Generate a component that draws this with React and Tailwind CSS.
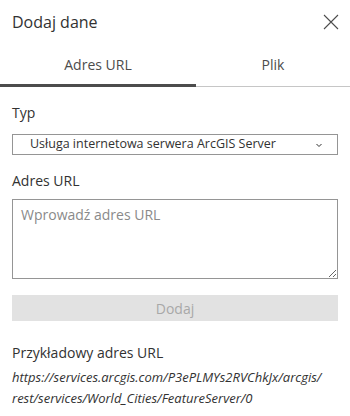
import React, { useState } from "react";

export default function App() {
  const [tab, setTab] = useState(0);
  const [url, setUrl] = useState("");

  return (
    <div
      className="w-[350px] h-[416px] bg-white text-[#323232] overflow-hidden"
      style={{ fontFamily: "'Open Sans', Lato, sans-serif" }}
    >
      {/* Header */}
      <div className="flex items-center justify-between h-[44px] pl-[12px] pr-[8px]">
        <h2 className="text-[16px] font-normal">Dodaj dane</h2>
        <button className="w-[22px] h-[22px] flex items-center justify-center text-[#4c4c4c]">
          <svg width="16" height="16" viewBox="0 0 16 16" fill="none" stroke="currentColor" strokeWidth="1.1">
            <path d="M1 1 L15 15 M15 1 L1 15" />
          </svg>
        </button>
      </div>

      {/* Tabs */}
      <div className="flex h-[43px] border-b border-[#c6c6c6]">
        <button
          onClick={() => setTab(0)}
          className={`w-[196px] text-[14px] text-[#4c4c4c] border-b-[3px] -mb-px ${tab === 0 ? "border-[#4c4c4c]" : "border-transparent"}`}
        >
          Adres URL
        </button>
        <button
          onClick={() => setTab(1)}
          className={`flex-1 text-[14px] text-[#4c4c4c] border-b-[3px] -mb-px ${tab === 1 ? "border-[#4c4c4c]" : "border-transparent"}`}
        >
          Plik
        </button>
      </div>

      {/* Form */}
      <div className="px-[12px] pt-[16px]">
        <label className="block text-[14px] leading-[20px]">Typ</label>
        <div className="mt-[11px] h-[21px] border border-[#959595] flex items-center justify-between pl-[17px] pr-[14px] text-[12.5px]">
          <span>Usługa internetowa serwera ArcGIS Server</span>
          <svg width="8" height="8" viewBox="0 0 8 8" fill="none" stroke="currentColor" strokeWidth="1">
            <path d="M1.5 3 L4 5.5 L6.5 3" />
          </svg>
        </div>

        <label className="block mt-[16px] text-[14px] leading-[20px]">Adres URL</label>
        <textarea
          value={url}
          onChange={(e) => setUrl(e.target.value)}
          placeholder="Wprowadź adres URL"
          className="mt-[8px] block w-full h-[80px] border border-[#959595] px-[8px] py-[4px] text-[14px] placeholder:text-[#8a8a8a] outline-none"
        />

        <button
          disabled
          className="mt-[16px] w-full h-[26px] bg-[#e2e2e2] text-[#a8a8a8] text-[14px]"
        >
          Dodaj
        </button>

        <div className="mt-[22px] text-[14px] leading-[20px]">Przykładowy adres URL</div>
        <p className="mt-[4px] text-[13px] leading-[21px] italic text-[#323232]">
          https://services.arcgis.com/P3ePLMYs2RVChkJx/arcgis/
          <br />
          rest/services/World_Cities/FeatureServer/0
        </p>
      </div>
    </div>
  );
}
